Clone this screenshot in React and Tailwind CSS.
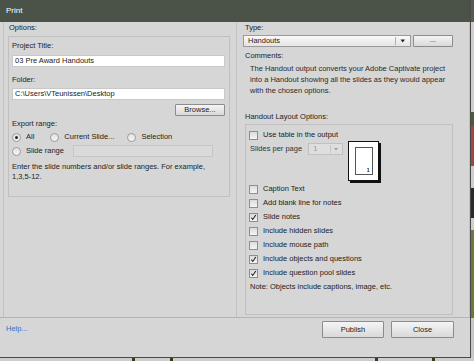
import React from "react";

const Check = ({ checked }) => (
  <div className="w-[9px] h-[9px] border border-[#8e8e8e] bg-gradient-to-b from-[#dcdcdc] to-[#f4f4f4] flex items-center justify-center shrink-0">
    {checked && (
      <svg width="9" height="9" viewBox="0 0 9 9">
        <path d="M1.8 4.6 L3.6 7 L7.4 1.2" stroke="#1a1a1a" strokeWidth="1.3" fill="none" />
      </svg>
    )}
  </div>
);

const Radio = ({ on }) => (
  <div className="w-[9px] h-[9px] rounded-full border border-[#9a9a9a] bg-gradient-to-b from-[#e2e2e2] to-[#f6f6f6] flex items-center justify-center shrink-0">
    {on && <div className="w-[3px] h-[3px] rounded-full bg-[#222]" />}
  </div>
);

const Btn = ({ children, w, h }) => (
  <div
    className={`${w} ${h} border border-[#8c8c8c] rounded-[1px] bg-gradient-to-b from-[#f5f5f5] to-[#d9d9d9] flex items-center justify-center text-[#222]`}
  >
    {children}
  </div>
);

const CheckRow = ({ label, checked }) => (
  <div className="h-[14px] flex items-center pl-[3px]">
    <Check checked={checked} />
    <span className="ml-[5px]">{label}</span>
  </div>
);

export default function App() {
  return (
    <div className="w-[474px] h-[361px] bg-[#c9c9c9] flex flex-col overflow-hidden font-['Liberation_Sans',Arial,sans-serif] text-[7.5px] leading-[12px] text-[#222]">
      <div className="flex h-[358px]">
        {/* dialog */}
        <div className="w-[471px] h-[358px] bg-[#d6d6d6] border-r border-b border-[#4a4a4a] flex flex-col">
          {/* title */}
          <div className="h-[22px] bg-[#4b5348] text-white text-[8px] flex items-center pl-[6px] shrink-0">
            Print
          </div>
          {/* body */}
          <div className="h-[296px] flex border-b border-[#b4b4b4] shrink-0">
            {/* left column */}
            <div className="w-[237px] pl-[3px] flex shrink-0">
              <div className="w-[234px] h-full border-l border-r border-[#c2c2c2] flex flex-col">
                <div className="h-[12px] ml-[5px] mt-[0px]">Options:</div>
                <div className="ml-[4px] mt-[2px] w-[222px] h-[161px] border border-[#c0c0c0] flex flex-col">
                  <div className="h-[12px] mt-[3px] ml-[3px]">Project Title:</div>
                  <div className="mt-[3px] ml-[3px] w-[213px] h-[12px] bg-white border border-[#c8c8c8] flex items-center pl-[2px] leading-none">
                    03 Pre Award Handouts
                  </div>
                  <div className="h-[12px] mt-[7px] ml-[3px]">Folder:</div>
                  <div className="mt-[2px] ml-[3px] w-[213px] h-[12px] bg-white border border-[#c8c8c8] flex items-center pl-[2px] leading-none">
                    C:\Users\VTeunissen\Desktop
                  </div>
                  <div className="mt-[4px] flex justify-end mr-[4px]">
                    <Btn w="w-[50px]" h="h-[12px]">Browse...</Btn>
                  </div>
                  <div className="h-[12px] mt-[2px] ml-[3px]">Export range:</div>
                  <div className="h-[12px] mt-[1px] ml-[3px] flex items-center">
                    <Radio on />
                    <span className="ml-[5px]">All</span>
                    <div className="ml-[16px]">
                      <Radio />
                    </div>
                    <span className="ml-[5px]">Current Slide...</span>
                    <div className="ml-[13px]">
                      <Radio />
                    </div>
                    <span className="ml-[5px]">Selection</span>
                  </div>
                  <div className="h-[12px] mt-[2px] ml-[3px] flex items-center">
                    <Radio />
                    <span className="ml-[5px]">Slide range</span>
                    <div className="ml-[9px] w-[140px] h-[12px] bg-[#dadada] border border-[#c6c6c6]" />
                  </div>
                  <div className="mt-[5px] ml-[3px] leading-[10px] whitespace-nowrap">
                    Enter the slide numbers and/or slide ranges. For example,
                    <br />
                    1,3,5-12.
                  </div>
                </div>
              </div>
            </div>
            {/* right column */}
            <div className="w-[233px] flex flex-col border-r border-[#c2c2c2]">
              <div className="h-[12px] ml-[8px]">Type:</div>
              <div className="mt-[1px] ml-[6px] flex h-[12px]">
                <div className="w-[168px] h-[12px] border border-[#9a9a9a] bg-gradient-to-b from-[#fafafa] to-[#e4e4e4] flex items-center leading-none">
                  <span className="ml-[4px] flex-1">Handouts</span>
                  <div className="w-px h-[8px] bg-[#b0b0b0]" />
                  <svg width="14" height="10" viewBox="0 0 14 10">
                    <path d="M4.5 3.5 L9 3.5 L6.75 6.5 Z" fill="#222" />
                  </svg>
                </div>
                <div className="ml-[2px]">
                  <Btn w="w-[40px]" h="h-[12px]">
                    <span className="leading-none -mt-[2px]">...</span>
                  </Btn>
                </div>
              </div>
              <div className="h-[12px] mt-[3px] ml-[8px]">Comments:</div>
              <div className="mt-[1px] ml-[13px] leading-[11px] whitespace-nowrap text-[#2a2a2a]">
                The Handout output converts your Adobe Captivate project
                <br />
                into a Handout showing all the slides as they would appear
                <br />
                with the chosen options.
              </div>
              <div className="h-[12px] mt-[15px] ml-[8px]">Handout Layout Options:</div>
              <div className="mt-[1px] ml-[8px] w-[208px] h-[191px] border border-[#c0c0c0] flex flex-col">
                <div className="mt-[4px]">
                  <div className="h-[12px] flex items-center pl-[3px]">
                    <Check />
                    <span className="ml-[5px]">Use table in the output</span>
                  </div>
                </div>
                <div className="flex h-[40px]">
                  <div className="mt-[2px] ml-[4px] h-[12px] flex items-center">
                    <span className="text-[#333]">Slides per page</span>
                    <div className="ml-[6px] w-[35px] h-[12px] border border-[#c0c0c0] bg-[#dedede] flex items-center leading-none text-[#9a9a9a]">
                      <span className="ml-[4px] w-[17px]">1</span>
                      <div className="w-px h-[8px] bg-[#c4c4c4]" />
                      <svg width="11" height="10" viewBox="0 0 11 10">
                        <path d="M3 4 L7 4 L5 6.5 Z" fill="#9a9a9a" />
                      </svg>
                    </div>
                  </div>
                  <div className="ml-[5px] w-[31px] h-[40px] bg-white border border-[#111] shadow-[2px_2px_0_#111] flex items-center justify-center">
                    <div className="w-[18px] h-[28px] border border-[#555] flex items-end justify-end">
                      <span className="text-[5px] leading-[6px] mr-[2px] mb-[1px] font-bold">1</span>
                    </div>
                  </div>
                </div>
                <div className="mt-[1px]">
                  <CheckRow label="Caption Text" />
                  <CheckRow label="Add blank line for notes" />
                  <CheckRow label="Slide notes" checked />
                  <CheckRow label="Include hidden slides" />
                  <CheckRow label="Include mouse path" />
                  <CheckRow label="Include objects and questions" checked />
                  <CheckRow label="Include question pool slides" checked />
                </div>
                <div className="h-[12px] mt-[1px] ml-[4px]">Note: Objects include captions, image, etc.</div>
              </div>
            </div>
          </div>
          {/* footer */}
          <div className="flex-1 flex items-start">
            <div className="mt-[5px] ml-[6px] h-[12px] text-[#3a6fc4] flex-1">Help...</div>
            <div className="mt-[3px] flex mr-[16px]">
              <Btn w="w-[62px]" h="h-[17px]">Publish</Btn>
              <div className="ml-[7px]">
                <Btn w="w-[63px]" h="h-[17px]">Close</Btn>
              </div>
            </div>
          </div>
        </div>
        {/* background strip right */}
        <div className="w-[3px] h-[358px] flex flex-col">
          <div className="h-[22px] bg-[#555a52]" />
          <div className="h-[90px] bg-[#cfcfcf]" />
          <div className="h-[14px] bg-[#4e5a3a]" />
          <div className="h-[40px] bg-[#a8443f]" />
          <div className="h-[22px] bg-[#d0cccc]" />
          <div className="h-[30px] bg-[#2a2a2a]" />
          <div className="h-[12px] bg-[#cfcfcf]" />
          <div className="h-[88px] bg-[#6b7a3c]" />
          <div className="flex-1 bg-[#c8c8c8]" />
        </div>
      </div>
      <div className="flex-1 bg-[#cdcdcd] flex">
        <div className="ml-[132px] w-[3px] bg-[#3c3a1e]" />
        <div className="ml-[35px] w-[3px] bg-[#3c3a1e]" />
        <div className="ml-[202px] w-[3px] bg-[#3c3a1e]" />
        <div className="ml-[54px] w-[3px] bg-[#3c3a1e]" />
      </div>
    </div>
  );
}
